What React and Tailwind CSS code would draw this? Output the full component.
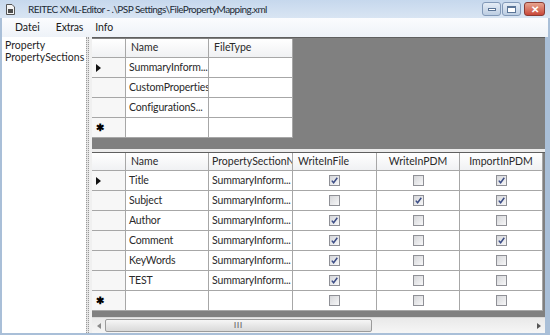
import React from 'react';

const upperRows = [
  { name: 'SummaryInform...', sel: true, current: true },
  { name: 'CustomProperties' },
  { name: 'ConfigurationS...' },
];

const lowerRows = [
  { name: 'Title', section: 'SummaryInform...', file: true, pdm: false, imp: true, sel: true },
  { name: 'Subject', section: 'SummaryInform...', file: false, pdm: true, imp: true },
  { name: 'Author', section: 'SummaryInform...', file: true, pdm: false, imp: false },
  { name: 'Comment', section: 'SummaryInform...', file: true, pdm: false, imp: true },
  { name: 'KeyWords', section: 'SummaryInform...', file: true, pdm: false, imp: false },
  { name: 'TEST', section: 'SummaryInform...', file: true, pdm: false, imp: false },
];

function Check({ on }) {
  return (
    <span className="w-[11px] h-[11px] border border-[#8f9096] bg-linear-to-br from-[#d6d7da] to-[#f7f7f8] flex items-center justify-center">
      {on && (
        <svg width="9" height="9" viewBox="0 0 9 9">
          <path d="M1.8 4.6 L3.6 6.8 L7.3 1.8" stroke="#3c4d86" strokeWidth="1.5" fill="none" />
        </svg>
      )}
    </span>
  );
}

function RowHead({ mark }) {
  return (
    <div className="border-r border-b border-[#a7a7a7] bg-[#f7f7f7] flex items-center pl-[4px] leading-none text-black">
      {mark === 'arrow' && (
        <svg width="5" height="8" viewBox="0 0 5 8">
          <path d="M0 0 L5 4 L0 8 Z" fill="#111" />
        </svg>
      )}
      {mark === 'new' && <span className="text-[10px] font-bold -mt-[1px]">✱</span>}
    </div>
  );
}

const head = 'border-r border-b border-[#a7a7a7] bg-linear-to-b from-white to-[#f0f1f3] px-[5px] flex items-center overflow-hidden whitespace-nowrap text-[#2a2a2a]';
const cell = 'border-r border-b border-[#a7a7a7] bg-white px-[3px] flex items-center overflow-hidden whitespace-nowrap text-[#2a2a2a] tracking-[-0.15px]';
const boxCell = 'border-r border-b border-[#a7a7a7] bg-white flex items-center justify-center';

export default function App() {
  return (
    <div className="w-[550px] h-[335px] flex flex-col bg-[#a9bfd8] font-['Lato',sans-serif] text-[10.5px] overflow-hidden">
      {/* title bar */}
      <div className="h-[18px] flex items-center bg-linear-to-b from-[#c6d8ed] to-[#d9e5f3] pl-[6px] pr-[5px]">
        <svg width="9" height="11" viewBox="0 0 9 11" className="mr-[13px]">
          <path d="M0.5 0.5 H6 L8.5 3 V10.5 H0.5 Z" fill="#f4f4f4" stroke="#555" />
          <rect x="2" y="5" width="5" height="4" fill="#4d4d4d" />
        </svg>
        <span className="text-[10px] tracking-[-0.55px] text-[#222b36]">REITEC XML-Editor - .\PSP Settings\FilePropertyMapping.xml</span>
        <div className="ml-auto flex items-start h-full pt-[2px] gap-[1px]">
          <div className="w-[19px] h-[14px] rounded-[3px] border border-[#8299b8] bg-linear-to-b from-[#e5edf6] to-[#bccde2] flex items-end justify-center pb-[4px]">
            <span className="w-[8px] h-[3px] bg-white border border-[#5b7597]" />
          </div>
          <div className="w-[19px] h-[14px] rounded-[3px] border border-[#8299b8] bg-linear-to-b from-[#e5edf6] to-[#bccde2] flex items-center justify-center">
            <span className="w-[9px] h-[7px] border border-[#5b7597] border-t-[2px] bg-white" />
          </div>
          <div className="ml-[2px] w-[21px] h-[14px] rounded-[3px] border border-[#8a3b33] bg-linear-to-b from-[#e6a38f] to-[#c8463a] flex items-center justify-center">
            <span className="text-white text-[10px] font-bold leading-none">✕</span>
          </div>
        </div>
      </div>

      {/* menu bar */}
      <div className="h-[19px] flex items-center bg-linear-to-b from-[#fbfcfe] to-[#eef2f8] mx-[2px] text-[#1b1b1b]">
        <span className="ml-[13px]">Datei</span>
        <span className="ml-[16px] tracking-[-0.2px]">Extras</span>
        <span className="ml-[12px]">Info</span>
      </div>

      {/* content */}
      <div className="flex-1 flex mx-[2px] mb-[2px] mr-[5px] bg-[#f0f0f0] min-h-0">
        <div className="w-[84px] bg-white flex flex-col pl-[3px] pt-[2px] leading-[12px] text-[#1f1f1f]">
          <span>Property</span>
          <span>PropertySections</span>
        </div>
        <div className="w-[6px] flex">
          <div className="w-[3px] border-x border-dotted border-[#9a9a9a] bg-[#e4e4e4]" />
          <div className="w-[3px] bg-[#f0f0f0]" />
        </div>

        <div className="flex-1 flex flex-col min-w-0">
          {/* upper grid */}
          <div className="h-[112px] bg-[#808080] border-t border-[#5f5f5f] pt-[1px]">
            <div className="grid grid-cols-[34px_83px_84px] grid-rows-[19px_20px_20px_20px_20px] w-[201px]">
              <div className={head} />
              <div className={head}>Name</div>
              <div className={head}>FileType</div>
              {upperRows.map((r, i) => (
                <React.Fragment key={i}>
                  <RowHead mark={r.current ? 'arrow' : null} />
                  <div className={`${cell} ${r.sel ? 'bg-[#cde8f8]' : ''}`}>{r.name}</div>
                  <div className={cell} />
                </React.Fragment>
              ))}
              <RowHead mark="new" />
              <div className={cell} />
              <div className={cell} />
            </div>
          </div>

          {/* splitter */}
          <div className="h-[3px] bg-[#ececec]" />

          {/* lower grid */}
          <div className="flex-1 bg-[#808080] border-t border-[#5f5f5f] flex flex-col min-h-0">
            <div className="grid grid-cols-[34px_83px_84px_84px_83px_83px] grid-rows-[18px_20px_20px_20px_20px_20px_20px_20px] w-[451px]">
              <div className={head} />
              <div className={head}>Name</div>
              <div className={`${head} !px-[3px]`}>PropertySectionName</div>
              <div className={head}>WriteInFile</div>
              <div className={`${head} justify-center`}>WriteInPDM</div>
              <div className={`${head} justify-center`}>ImportInPDM</div>
              {lowerRows.map((r, i) => (
                <React.Fragment key={i}>
                  <RowHead mark={i === 0 ? 'arrow' : null} />
                  <div className={`${cell} ${r.sel ? 'bg-[#cde8f8]' : ''}`}>{r.name}</div>
                  <div className={cell}>{r.section}</div>
                  <div className={boxCell}><Check on={r.file} /></div>
                  <div className={boxCell}><Check on={r.pdm} /></div>
                  <div className={boxCell}><Check on={r.imp} /></div>
                </React.Fragment>
              ))}
              <RowHead mark="new" />
              <div className={cell} />
              <div className={cell} />
              <div className={boxCell}><Check /></div>
              <div className={boxCell}><Check /></div>
              <div className={boxCell}><Check /></div>
            </div>
            <div className="flex-1" />
            {/* horizontal scrollbar */}
            <div className="h-[16px] bg-linear-to-b from-[#e9e9e9] to-[#f6f6f6] border-t border-[#d8d8d8] flex items-center">
              <span className="w-[13px] flex justify-center">
                <svg width="4" height="6" viewBox="0 0 4 6"><path d="M4 0 L0 3 L4 6 Z" fill="#8a8a8a" /></svg>
              </span>
              <div className="w-[267px] h-[13px] rounded-[2px] border border-[#9b9b9b] bg-linear-to-b from-[#f6f6f6] to-[#d9d9d9] flex items-center justify-center">
                <span className="text-[7px] leading-none text-[#6d6d6d] tracking-[1px] font-bold">III</span>
              </div>
              <div className="flex-1" />
              <span className="w-[13px] flex justify-center">
                <svg width="4" height="6" viewBox="0 0 4 6"><path d="M0 0 L4 3 L0 6 Z" fill="#555" /></svg>
              </span>
            </div>
          </div>
        </div>
      </div>
    </div>
  );
}
